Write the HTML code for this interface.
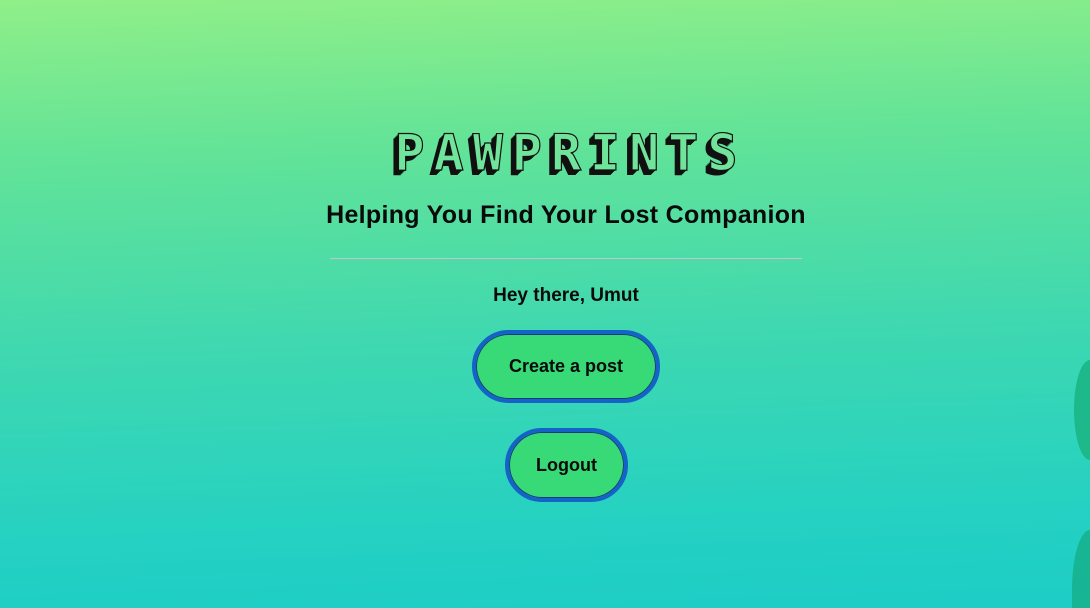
<!DOCTYPE html>
<html><head><style>
html,body{margin:0;padding:0;width:1090px;height:608px;overflow:hidden;}
body{position:relative;
background:linear-gradient(178deg,#90ef88 0%,#62e398 25%,#3fd8b0 55%,#24d1c2 85%,#1dcdc6 100%);
font-family:"Liberation Sans",sans-serif;color:#0a0a0a;}
.t{position:absolute;left:266px;width:600px;text-align:center;white-space:nowrap;}
h1{margin:0;top:124px;font-size:50px;font-weight:bold;letter-spacing:9px;font-family:"DejaVu Sans Mono","Liberation Mono",monospace;
color:#6fe49a;-webkit-text-stroke:1.2px #111;text-shadow:-1px 1px 0 #111,-2px 2px 0 #111,-3px 3px 0 #111,-4px 4px 0 #111,-5px 5px 0 #111;padding-left:9px;box-sizing:border-box;}
.sub{top:201px;font-size:25px;font-weight:bold;letter-spacing:0.3px;}
.line{position:absolute;left:330px;width:472px;top:258px;height:1px;background:#c9c2d2;}
.hey{top:285px;font-size:19px;font-weight:bold;}
.btn{position:absolute;box-sizing:border-box;background:#38d977;border:4px solid #1562c8;box-shadow:inset 0 0 0 1px #0c3e7a;border-radius:40px;
font-weight:bold;font-size:18px;display:flex;align-items:center;justify-content:center;}
.blob{position:absolute;}
</style></head><body>
<h1 class="t">PAWPRINTS</h1>
<div class="t sub">Helping You Find Your Lost Companion</div>
<div class="line"></div>
<div class="t hey">Hey there, Umut</div>
<div class="btn" style="left:472px;top:330px;width:188px;height:73px;">Create a post</div>
<div class="btn" style="left:505px;top:428px;width:123px;height:74px;">Logout</div>
<div class="blob" style="left:1074px;top:360px;width:16px;height:100px;background:#1db98a;border-radius:16px 0 0 16px/50px 0 0 50px;"></div>
<div class="blob" style="left:1072px;top:530px;width:18px;height:78px;background:#18b595;border-radius:18px 0 0 0/60px 0 0 0;"></div>
</body></html>
